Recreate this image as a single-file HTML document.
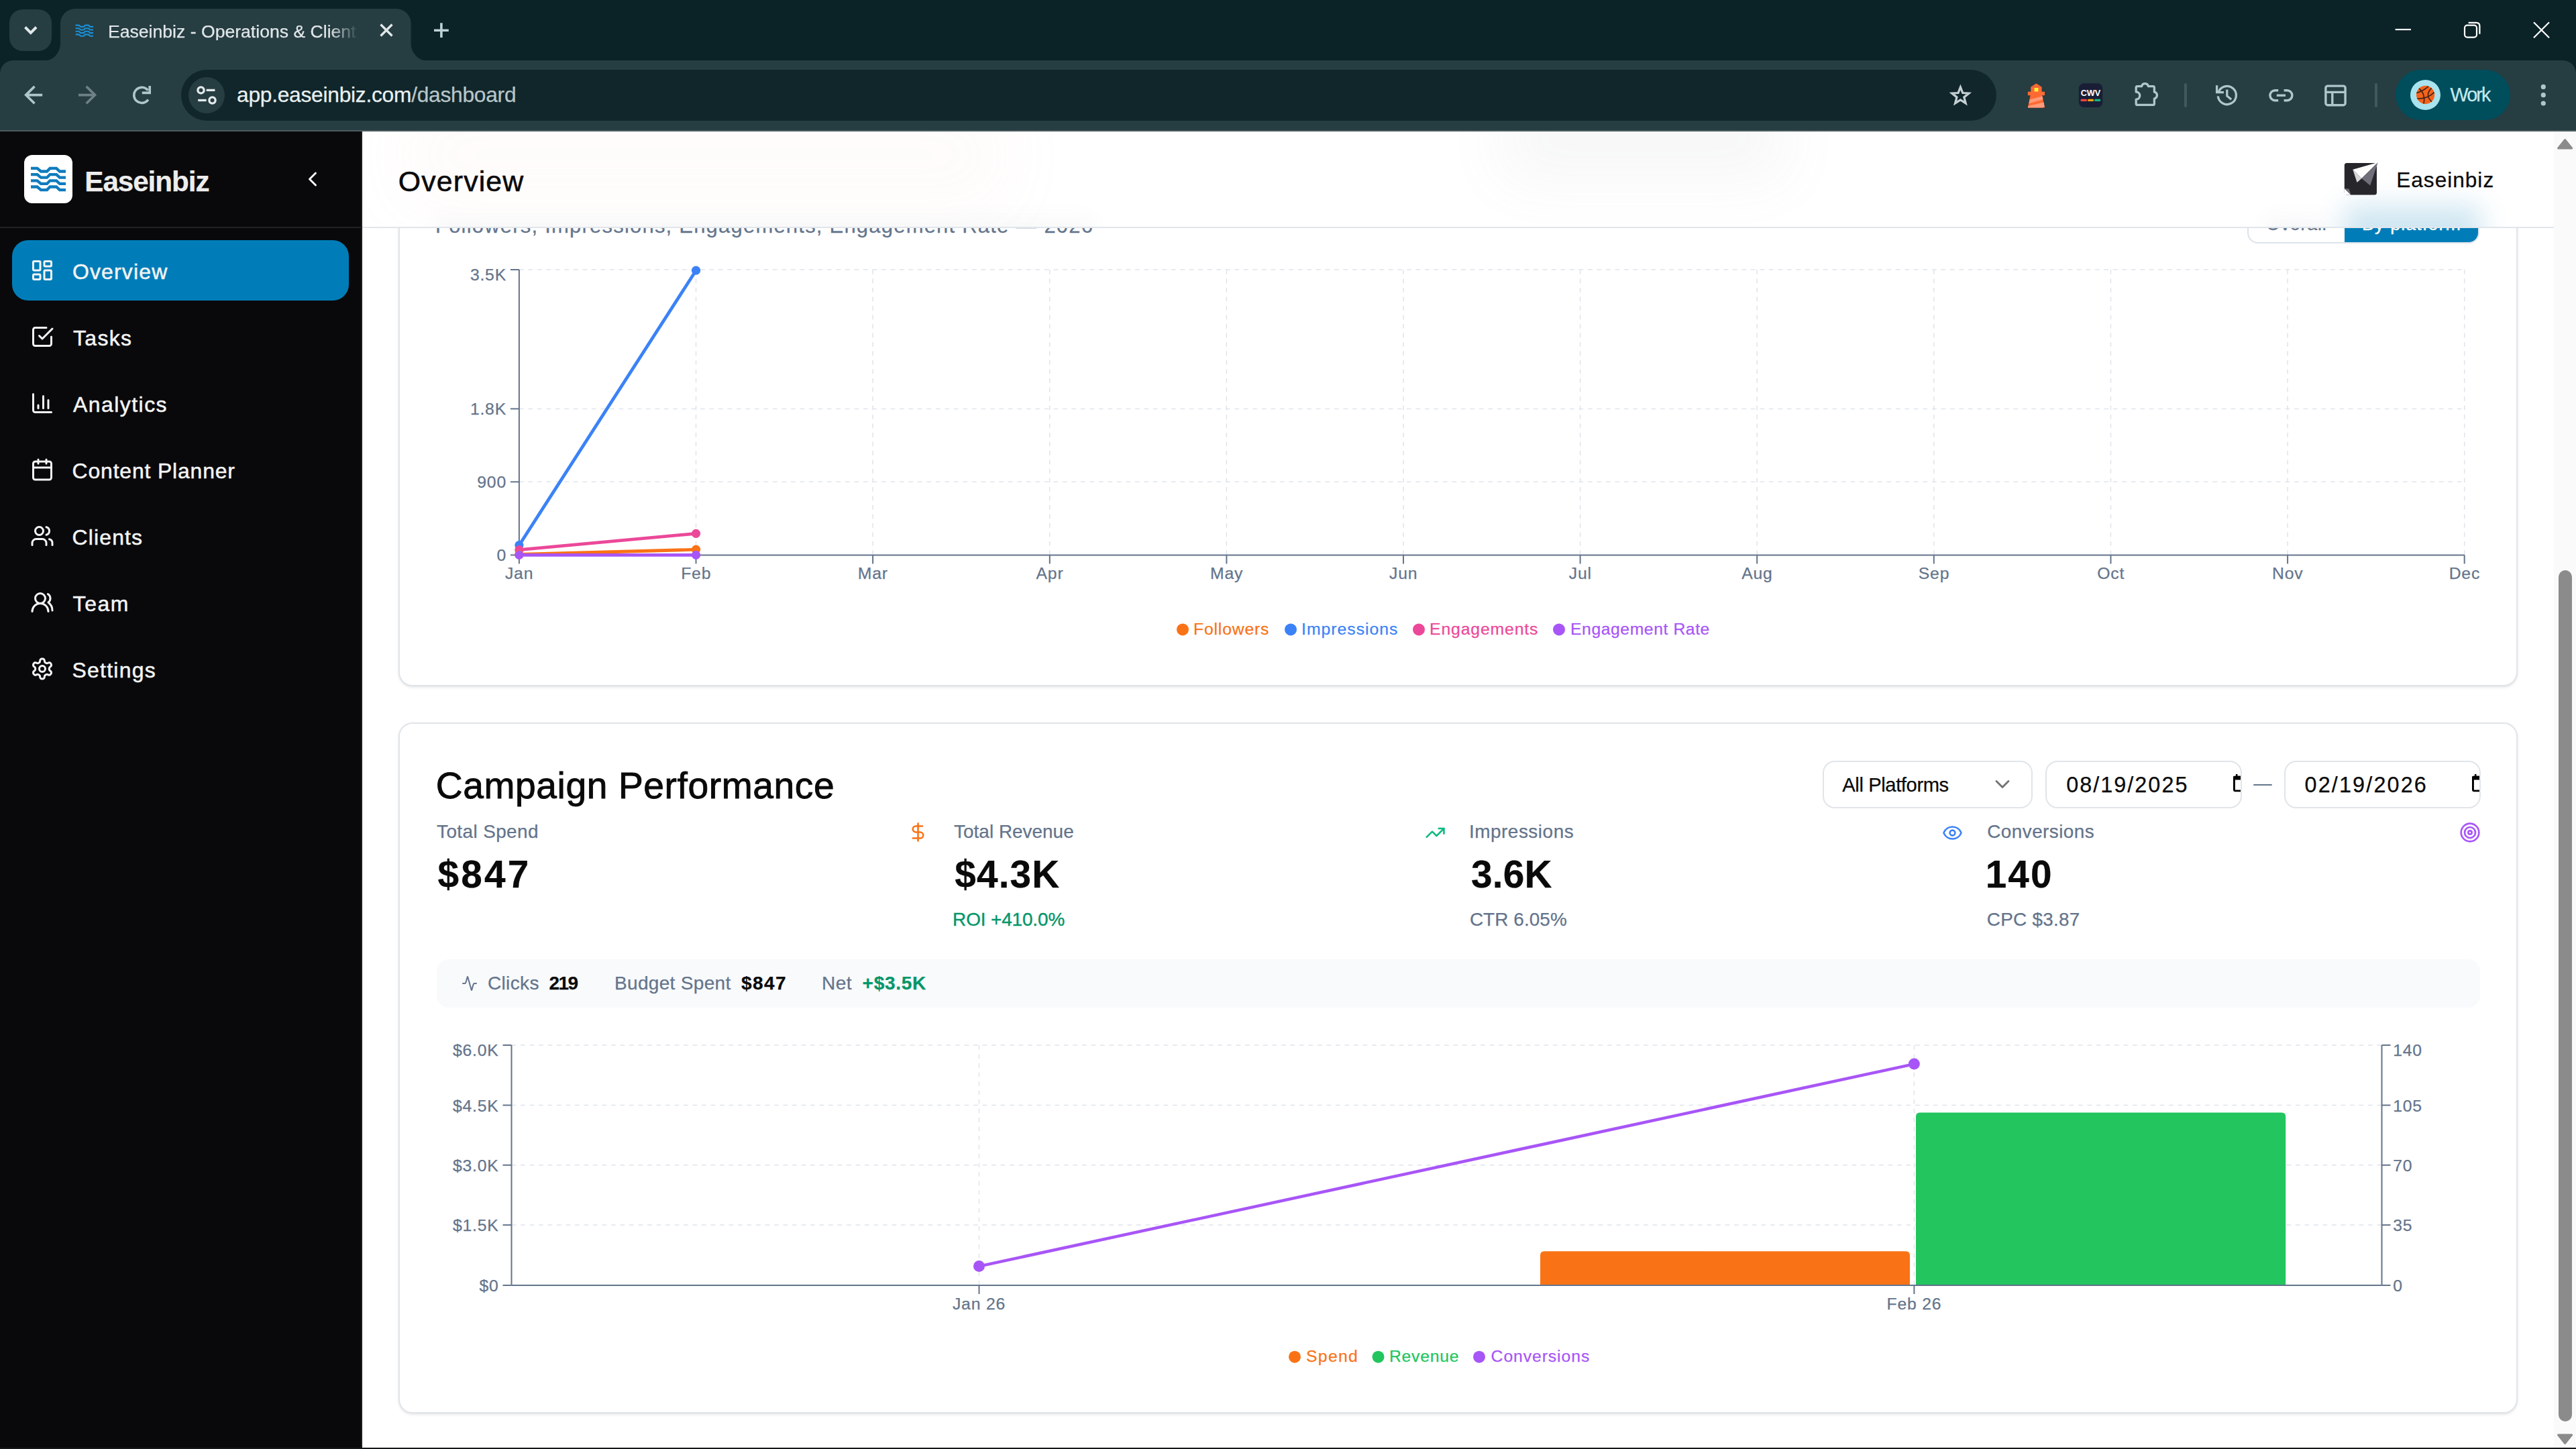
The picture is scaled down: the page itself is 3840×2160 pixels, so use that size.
<!DOCTYPE html>
<html lang="en">
<head>
<meta charset="utf-8">
<title>Easeinbiz - Operations &amp; Client</title>
<style>
*{box-sizing:border-box;margin:0;padding:0}
html,body{width:3840px;height:2160px;overflow:hidden;background:#fff}
body{position:relative;font-family:"Liberation Sans",sans-serif;color:#0a0a0a}
.abs{position:absolute}
.t{position:absolute;white-space:nowrap;line-height:1;-webkit-text-stroke:.25px currentColor}
svg{display:block;overflow:visible}
.ic{position:absolute;fill:none;stroke:currentColor;stroke-width:2;stroke-linecap:round;stroke-linejoin:round}
/* ---------- browser chrome ---------- */
#titlebar{left:0;top:0;width:3840px;height:130px;background:#0b2227}
#toolbar{left:0;top:90px;width:3840px;height:104px;background:#263d42;border-radius:20px 20px 0 0}
#tbline{left:0;top:194px;width:3840px;height:2px;background:#4b5c60}
#tabsearch{left:14px;top:14px;width:63px;height:62px;background:#263d42;border-radius:20px}
#urlbar{left:270px;top:104px;width:2706px;height:76px;background:#10262b;border-radius:38px}
#siteinfo{left:281px;top:115px;width:54px;height:54px;border-radius:27px;background:#263d42}
#work{left:3571px;top:104px;width:171px;height:75px;border-radius:38px;background:#004d5c}
#avatar{left:3593px;top:119px;width:45px;height:45px;border-radius:50%;background:#a9e3ee}
.sep{width:4px;height:36px;top:124px;background:#41585d;border-radius:2px}
/* ---------- sidebar ---------- */
#side{left:0;top:196px;width:540px;height:1964px;background:#09090b;border-right:2px solid #1c1c1f}
#sidehead{left:0;top:0;width:538px;height:144px;border-bottom:2px solid #222225}
#logo{left:36px;top:35px;width:72px;height:72px;border-radius:12px;background:#fff}
#navact{left:18px;top:162px;width:502px;height:90px;border-radius:24px;background:#007db8}
.nav{color:#f4f4f5;font-size:31.9px;letter-spacing:1.3px;-webkit-text-stroke:.5px #f4f4f5}
/* ---------- main ---------- */
#main{left:540px;top:196px;width:3267px;height:1962px;background:#fff;overflow:hidden}
#scroll{left:3807px;top:196px;width:33px;height:1962px;background:#fafafa}
#thumb{left:7px;top:654px;width:20px;height:1269px;border-radius:10px;background:#8b8b8b}
#bottombar{left:0;top:2158px;width:3840px;height:2px;background:#141719}
.card{border:2px solid #e0e5ea;border-radius:21px;background:#fff;box-shadow:0 1.5px 4.5px rgba(0,0,0,.08),0 1.5px 3px -1.5px rgba(0,0,0,.08)}
#hdr{left:540px;top:196px;width:3267px;height:144px;background:#fff;border-bottom:2px solid #e0e6eb;overflow:hidden}
.ax{font-size:24.75px;fill:#64748b;stroke:#64748b;stroke-width:.25px;font-family:"Liberation Sans",sans-serif}
.lg{font-size:24px}
</style>
</head>
<body>
<!-- CHROME -->
<div id="titlebar" class="abs"></div>
<div id="tabsearch" class="abs"></div>
<svg class="abs" style="left:0;top:0" width="700" height="92" viewBox="0 0 700 92"><path d="M64,91 A26,26 0 0 0 90,65 L90,35 A22,22 0 0 1 112,13 L590.6,13 A22,22 0 0 1 612.6,35 L612.6,65 A26,26 0 0 0 638.6,91 Z" fill="#263d42"/></svg>
<div id="toolbar" class="abs"></div>
<div id="tbline" class="abs"></div>
<div id="urlbar" class="abs"></div>
<div id="siteinfo" class="abs"></div>
<div id="work" class="abs"></div>
<div id="avatar" class="abs"></div>
<div class="abs sep" style="left:3256px"></div>
<div class="abs sep" style="left:3540px"></div>
<svg class="abs" style="left:0;top:0" width="3840" height="196" viewBox="0 0 3840 196"><path d="M37.5 40.5 L45.8 48.8 L54.1 40.5" stroke="#e1e8ea" stroke-width="4" fill="none"/>
<g stroke="#1b8fd6" stroke-width="2.1" fill="none"><polyline points="112.6,37.6 117.5,37.6 120.3,39.9 124.8,39.9 127.0,37.6 131.8,37.6 134.4,39.9 139.0,39.9"/><polyline points="112.6,42.2 117.5,42.2 120.3,44.5 124.8,44.5 127.0,42.2 131.8,42.2 134.4,44.5 139.0,44.5"/><polyline points="112.6,46.8 117.5,46.8 120.3,49.1 124.8,49.1 127.0,46.8 131.8,46.8 134.4,49.1 139.0,49.1"/><polyline points="112.6,51.4 117.5,51.4 120.3,53.7 124.8,53.7 127.0,51.4 131.8,51.4 134.4,53.7 139.0,53.7"/></g>
<path d="M567.5 36.5 L584.5 53.5 M584.5 36.5 L567.5 53.5" stroke="#e1e8ea" stroke-width="3.3" fill="none"/>
<path d="M647 45.2 H668.8 M657.9 34.3 V56.1" stroke="#bcd2d7" stroke-width="3.6" fill="none"/>
<path d="M63.2 141.6 H40 M51.5 128.9 L38.6 141.6 L51.5 154.3" stroke="#afc6cb" stroke-width="3.6" fill="none"/>
<path d="M117 141.6 H140.2 M128.7 128.9 L141.6 141.6 L128.7 154.3" stroke="#6d8185" stroke-width="3.6" fill="none"/>
<path d="M220.5 134.7 A11.6 11.6 0 1 0 220.9 148.5" stroke="#afc6cb" stroke-width="3.6" fill="none"/>
<path d="M213.4 138.4 H224.8 V128" stroke="#afc6cb" stroke-width="3.6" fill="none" transform="translate(-1.6,0)"/>
<g stroke="#e4e9eb" stroke-width="3.3" fill="none"><circle cx="299.5" cy="134.4" r="4.6"/><path d="M307.6 134.4 H320.4"/><path d="M295.2 149.5 H307.6"/><circle cx="316.5" cy="149.5" r="4.6"/></g>
<polygon points="2922.4,129.8 2925.8,138.5 2935.0,139.0 2927.8,144.9 2930.2,153.9 2922.4,148.8 2914.6,153.9 2917.0,144.9 2909.8,139.0 2919.0,138.5" stroke="#c6d0d3" stroke-width="3.2" fill="none" stroke-linejoin="miter"/>
<g><polygon points="3035.4,124.4 3043.6,129.6 3027.3,129.6" fill="#ff6a33"/><rect x="3027.3" y="129.4" width="16.3" height="7.6" fill="#ff6a33"/><rect x="3032.6" y="131" width="5.8" height="5.8" fill="#fff03a"/><rect x="3022.9" y="136.7" width="25.1" height="5.5" fill="#ff6a33"/><polygon points="3026.7,142 3044.1,142 3048,160.4 3022.9,160.4" fill="#ff6a33"/><polygon points="3025.6,148.5 3044.6,143.5 3045.6,148.2 3024.4,154.2" fill="#ff9a78"/><polygon points="3023.4,158 3046.7,152.6 3047.8,159.4 3044,160.4 3022.9,160.4" fill="#ff9a78"/></g>
<rect x="3098.9" y="124.3" width="35.4" height="35.7" rx="7.5" fill="#191e36"/>
<text x="3116.5" y="142.7" text-anchor="middle" font-family="Liberation Sans, sans-serif" font-weight="700" font-size="12.6" fill="#fff" textLength="29.6" lengthAdjust="spacingAndGlyphs">CWV</text>
<rect x="3101.6" y="147.7" width="9.3" height="3.4" rx="1.2" fill="#ef4444"/><rect x="3112.1" y="147.7" width="8.9" height="3.4" rx="1.2" fill="#f59e0b"/><rect x="3122.2" y="147.7" width="9" height="3.4" rx="1.2" fill="#10b981"/>
<path d="M3186.2 128.6 H3192.6 A5 5 0 0 1 3202.4 128.6 H3209.4 Q3211.4 128.6 3211.4 130.6 V137.2 A5 5 0 0 1 3211.4 147 V154.4 Q3211.4 156.4 3209.4 156.4 H3186.2 Q3184.2 156.4 3184.2 154.4 V148.2 A5.6 5.6 0 0 0 3184.2 137 V130.6 Q3184.2 128.6 3186.2 128.6 Z" stroke="#afc6cb" stroke-width="3.3" fill="none" stroke-linejoin="round"/>
<path d="M3307.0 137.5 A13.6 13.6 0 1 1 3306.3 143.4" stroke="#afc6cb" stroke-width="3.3" fill="none"/>
<path d="M3304.6 127.2 V137.6 H3315" stroke="#afc6cb" stroke-width="3.3" fill="none"/>
<path d="M3319.8 133.4 V143 L3326.2 148.2" stroke="#afc6cb" stroke-width="3.3" fill="none"/>
<g stroke="#afc6cb" stroke-width="3.4" fill="none"><path d="M3396.2 134.7 H3391.4 A7.5 7.5 0 0 0 3391.4 149.7 H3396.2"/><path d="M3404.6 134.7 H3409.4 A7.5 7.5 0 0 1 3409.4 149.7 H3404.6"/><path d="M3393.8 142.2 H3407"/></g>
<g stroke="#afc6cb" stroke-width="3.4" fill="none"><rect x="3466.9" y="128.1" width="29.2" height="28.6" rx="3"/><path d="M3466.9 137.4 H3496.1 M3476.8 137.4 V156.7"/></g>
<g><circle cx="3615.6" cy="141.4" r="13.6" fill="#f4631a"/><path d="M3606 131.8 Q3616 140 3613 154.6 M3620 128.6 Q3612 136 3602.4 138.4 M3624.6 131.4 Q3614 142 3625 151.6 M3603.4 146.8 Q3618 148 3628.6 137.6" stroke="#3a2016" stroke-width="1.5" fill="none"/></g>
<g fill="#afc6cb"><circle cx="3791.3" cy="129.4" r="3.6"/><circle cx="3791.3" cy="141.7" r="3.6"/><circle cx="3791.3" cy="154" r="3.6"/></g>
<g stroke="#fff" stroke-width="2.2" fill="none"><path d="M3570.6 44 H3594"/><rect x="3674" y="37.6" width="18" height="18" rx="4"/><path d="M3679.6 33.8 H3691.5 Q3696.4 33.8 3696.4 38.7 V50.8"/><path d="M3777 33.2 L3800 56.2 M3800 33.2 L3777 56.2"/></g></svg>
<div class="t" style="left:161px;top:33.6px;font-size:26.6px;color:#e1e7e9;width:374px;overflow:hidden;-webkit-mask-image:linear-gradient(90deg,#000 88%,transparent 100%);mask-image:linear-gradient(90deg,#000 88%,transparent 100%)">Easeinbiz - Operations &amp; Client Management</div>
<div class="t" style="left:353px;top:126.3px;font-size:31.7px;letter-spacing:-.24px;color:#eaf0f2">app.easeinbiz.com<span style="color:#b9c6c9">/dashboard</span></div>
<div class="t" style="left:3652.4px;top:127px;font-size:28.7px;letter-spacing:-1.8px;color:#c4e9f0">Work</div>
<!-- SIDEBAR -->
<div id="side" class="abs">
<div id="sidehead" class="abs"></div>
<div id="logo" class="abs"></div>
<div id="navact" class="abs"></div>
<svg class="abs" style="left:0;top:0" width="540" height="143" viewBox="0 0 540 143" fill="none" stroke="#0f7cbd" stroke-width="4.3" stroke-linejoin="miter"><polyline points="46.0,54.9 55.5,54.9 61.0,59.5 70.0,59.5 74.5,54.9 84.0,54.9 89.0,59.5 98.0,59.5"/><polyline points="46.0,64.1 55.5,64.1 61.0,68.7 70.0,68.7 74.5,64.1 84.0,64.1 89.0,68.7 98.0,68.7"/><polyline points="46.0,73.3 55.5,73.3 61.0,77.9 70.0,77.9 74.5,73.3 84.0,73.3 89.0,77.9 98.0,77.9"/><polyline points="46.0,82.5 55.5,82.5 61.0,87.1 70.0,87.1 74.5,82.5 84.0,82.5 89.0,87.1 98.0,87.1"/></svg>
<div class="t" style="left:126.3px;top:54.3px;font-size:42.2px;font-weight:700;letter-spacing:-1.05px;color:#ededed">Easeinbiz</div>
<svg class="ic" style="left:447.8px;top:53.2px;color:#f4f4f5" width="36" height="36" viewBox="0 0 24 24"><path d="m15 18-6-6 6-6"/></svg>
<svg class="ic" style="left:45px;top:189px;color:#f4f4f5" width="36" height="36" viewBox="0 0 24 24"><rect width="7" height="9" x="3" y="3" rx="1"/><rect width="7" height="5" x="14" y="3" rx="1"/><rect width="7" height="9" x="14" y="12" rx="1"/><rect width="7" height="5" x="3" y="16" rx="1"/></svg>
<div class="t nav" style="left:108.0px;top:193.6px;letter-spacing:1.18px">Overview</div>
<svg class="ic" style="left:45px;top:288px;color:#f4f4f5" width="36" height="36" viewBox="0 0 24 24"><path d="m9 11 3 3L22 4"/><path d="M21 12v7a2 2 0 0 1-2 2H5a2 2 0 0 1-2-2V5a2 2 0 0 1 2-2h11"/></svg>
<div class="t nav" style="left:109.0px;top:292.6px;letter-spacing:1.38px">Tasks</div>
<svg class="ic" style="left:45px;top:387px;color:#f4f4f5" width="36" height="36" viewBox="0 0 24 24"><path d="M3 3v16a2 2 0 0 0 2 2h16"/><path d="M18 17V9"/><path d="M13 17V5"/><path d="M8 17v-3"/></svg>
<div class="t nav" style="left:109.0px;top:391.6px;letter-spacing:1.49px">Analytics</div>
<svg class="ic" style="left:45px;top:486px;color:#f4f4f5" width="36" height="36" viewBox="0 0 24 24"><path d="M8 2v4"/><path d="M16 2v4"/><rect width="18" height="18" x="3" y="4" rx="2"/><path d="M3 10h18"/></svg>
<div class="t nav" style="left:107.6px;top:490.6px;letter-spacing:0.85px">Content Planner</div>
<svg class="ic" style="left:45px;top:585px;color:#f4f4f5" width="36" height="36" viewBox="0 0 24 24"><path d="M16 21v-2a4 4 0 0 0-4-4H6a4 4 0 0 0-4 4v2"/><circle cx="9" cy="7" r="4"/><path d="M22 21v-2a4 4 0 0 0-3-3.87"/><path d="M16 3.13a4 4 0 0 1 0 7.75"/></svg>
<div class="t nav" style="left:107.6px;top:589.6px;letter-spacing:1.16px">Clients</div>
<svg class="ic" style="left:45px;top:684px;color:#f4f4f5" width="36" height="36" viewBox="0 0 24 24"><path d="M18 21a8 8 0 0 0-16 0"/><circle cx="10" cy="8" r="5"/><path d="M22 20c0-3.37-2-6.5-4-8a5 5 0 0 0-.45-8.3"/></svg>
<div class="t nav" style="left:108.6px;top:688.6px;letter-spacing:1.62px">Team</div>
<svg class="ic" style="left:45px;top:783px;color:#f4f4f5" width="36" height="36" viewBox="0 0 24 24"><path d="M12.22 2h-.44a2 2 0 0 0-2 2v.18a2 2 0 0 1-1 1.73l-.43.25a2 2 0 0 1-2 0l-.15-.08a2 2 0 0 0-2.73.73l-.22.38a2 2 0 0 0 .73 2.73l.15.1a2 2 0 0 1 1 1.72v.51a2 2 0 0 1-1 1.74l-.15.09a2 2 0 0 0-.73 2.73l.22.38a2 2 0 0 0 2.73.73l.15-.08a2 2 0 0 1 2 0l.43.25a2 2 0 0 1 1 1.73V20a2 2 0 0 0 2 2h.44a2 2 0 0 0 2-2v-.18a2 2 0 0 1 1-1.73l.43-.25a2 2 0 0 1 2 0l.15.08a2 2 0 0 0 2.73-.73l.22-.39a2 2 0 0 0-.73-2.73l-.15-.08a2 2 0 0 1-1-1.74v-.5a2 2 0 0 1 1-1.74l.15-.09a2 2 0 0 0 .73-2.73l-.22-.38a2 2 0 0 0-2.73-.73l-.15.08a2 2 0 0 1-2 0l-.43-.25a2 2 0 0 1-1-1.73V4a2 2 0 0 0-2-2z"/><circle cx="12" cy="12" r="3"/></svg>
<div class="t nav" style="left:107.6px;top:787.6px;letter-spacing:1.25px">Settings</div>
</div>
<!-- MAIN -->
<div id="main" class="abs">
<!--MAIN-CONTENT-->
<div class="abs" style="left:-540px;top:-196px;width:3840px;height:2160px">
<div class="abs card" style="left:594px;top:230px;width:3159px;height:793px"></div>
<div class="t" style="left:649.0px;top:320.7px;font-size:31.00px;letter-spacing:1.21px;color:#64748b;font-weight:400;">Followers, Impressions, Engagements, Engagement Rate — 2026</div>
<div class="abs" style="left:3350px;top:306px;width:346px;height:57px;border:2px solid #dde3ea;border-radius:16px;background:#fff;overflow:hidden"><div class="abs" style="left:143px;top:-2px;width:203px;height:57px;background:#007db8"></div></div>
<div class="t" style="left:3378.0px;top:321.4px;font-size:26.90px;letter-spacing:0.74px;color:#64748b;font-weight:400;-webkit-text-stroke:.4px #64748b">Overall</div>
<div class="t" style="left:3521.0px;top:321.4px;font-size:26.90px;letter-spacing:1.10px;color:#fff;font-weight:400;-webkit-text-stroke:.4px #fff">By platform</div>
<div class="abs card" style="left:594px;top:1077px;width:3159px;height:1030px"></div>
<svg class="abs" style="left:0;top:0" width="3840" height="2160" viewBox="0 0 3840 2160">
<g stroke="#dfe4ea" stroke-width="1.5" stroke-dasharray="6.75 6.75" fill="none"><line x1="773.9" y1="402.0" x2="3673.7" y2="402.0"/><line x1="773.9" y1="609.4" x2="3673.7" y2="609.4"/><line x1="773.9" y1="718.3" x2="3673.7" y2="718.3"/><line x1="1037.5" y1="402.0" x2="1037.5" y2="827.4"/><line x1="1301.1" y1="402.0" x2="1301.1" y2="827.4"/><line x1="1564.8" y1="402.0" x2="1564.8" y2="827.4"/><line x1="1828.4" y1="402.0" x2="1828.4" y2="827.4"/><line x1="2092.0" y1="402.0" x2="2092.0" y2="827.4"/><line x1="2355.6" y1="402.0" x2="2355.6" y2="827.4"/><line x1="2619.2" y1="402.0" x2="2619.2" y2="827.4"/><line x1="2882.8" y1="402.0" x2="2882.8" y2="827.4"/><line x1="3146.5" y1="402.0" x2="3146.5" y2="827.4"/><line x1="3410.1" y1="402.0" x2="3410.1" y2="827.4"/><line x1="3673.7" y1="402.0" x2="3673.7" y2="827.4"/></g>
<g stroke="#64748b" stroke-width="2" fill="none"><line x1="773.9" y1="402.0" x2="773.9" y2="827.4"/><line x1="773.9" y1="827.4" x2="3673.7" y2="827.4"/><line x1="760.9" y1="402.0" x2="773.9" y2="402.0"/><line x1="760.9" y1="609.4" x2="773.9" y2="609.4"/><line x1="760.9" y1="718.3" x2="773.9" y2="718.3"/><line x1="760.9" y1="827.4" x2="773.9" y2="827.4"/><line x1="773.9" y1="827.4" x2="773.9" y2="840.4"/><line x1="1037.5" y1="827.4" x2="1037.5" y2="840.4"/><line x1="1301.1" y1="827.4" x2="1301.1" y2="840.4"/><line x1="1564.8" y1="827.4" x2="1564.8" y2="840.4"/><line x1="1828.4" y1="827.4" x2="1828.4" y2="840.4"/><line x1="2092.0" y1="827.4" x2="2092.0" y2="840.4"/><line x1="2355.6" y1="827.4" x2="2355.6" y2="840.4"/><line x1="2619.2" y1="827.4" x2="2619.2" y2="840.4"/><line x1="2882.8" y1="827.4" x2="2882.8" y2="840.4"/><line x1="3146.5" y1="827.4" x2="3146.5" y2="840.4"/><line x1="3410.1" y1="827.4" x2="3410.1" y2="840.4"/><line x1="3673.7" y1="827.4" x2="3673.7" y2="840.4"/></g>
<text class="ax" x="755.0" y="418.1" text-anchor="end" letter-spacing=".8">3.5K</text>
<text class="ax" x="755.0" y="618.2" text-anchor="end" letter-spacing=".8">1.8K</text>
<text class="ax" x="755.0" y="726.8" text-anchor="end" letter-spacing=".8">900</text>
<text class="ax" x="755.0" y="835.9" text-anchor="end" letter-spacing=".8">0</text>
<text class="ax" x="774.1" y="863.0" text-anchor="middle" letter-spacing=".8">Jan</text>
<text class="ax" x="1037.7" y="863.0" text-anchor="middle" letter-spacing=".8">Feb</text>
<text class="ax" x="1301.3" y="863.0" text-anchor="middle" letter-spacing=".8">Mar</text>
<text class="ax" x="1565.0" y="863.0" text-anchor="middle" letter-spacing=".8">Apr</text>
<text class="ax" x="1828.6" y="863.0" text-anchor="middle" letter-spacing=".8">May</text>
<text class="ax" x="2092.2" y="863.0" text-anchor="middle" letter-spacing=".8">Jun</text>
<text class="ax" x="2355.8" y="863.0" text-anchor="middle" letter-spacing=".8">Jul</text>
<text class="ax" x="2619.4" y="863.0" text-anchor="middle" letter-spacing=".8">Aug</text>
<text class="ax" x="2883.0" y="863.0" text-anchor="middle" letter-spacing=".8">Sep</text>
<text class="ax" x="3146.7" y="863.0" text-anchor="middle" letter-spacing=".8">Oct</text>
<text class="ax" x="3410.3" y="863.0" text-anchor="middle" letter-spacing=".8">Nov</text>
<text class="ax" x="3673.9" y="863.0" text-anchor="middle" letter-spacing=".8">Dec</text>
<g stroke="#3b82f6" fill="#3b82f6"><line x1="773.9" y1="812.7" x2="1037.5" y2="403.2" stroke-width="4.8"/><circle cx="773.9" cy="812.7" r="6.6" stroke="none"/><circle cx="1037.5" cy="403.2" r="6.6" stroke="none"/></g>
<g stroke="#ec4899" fill="#ec4899"><line x1="773.9" y1="819.7" x2="1037.5" y2="795.3" stroke-width="4.8"/><circle cx="773.9" cy="819.7" r="6.6" stroke="none"/><circle cx="1037.5" cy="795.3" r="6.6" stroke="none"/></g>
<g stroke="#f97316" fill="#f97316"><line x1="773.9" y1="826.5" x2="1037.5" y2="819.2" stroke-width="4.8"/><circle cx="773.9" cy="826.5" r="6.6" stroke="none"/><circle cx="1037.5" cy="819.2" r="6.6" stroke="none"/></g>
<g stroke="#a855f7" fill="#a855f7"><line x1="773.9" y1="827.4" x2="1037.5" y2="827.4" stroke-width="4.8"/><circle cx="773.9" cy="827.4" r="6.6" stroke="none"/><circle cx="1037.5" cy="827.4" r="6.6" stroke="none"/></g>
<circle cx="1763.0" cy="938.4" r="9" fill="#f97316"/>
<circle cx="1924.0" cy="938.4" r="9" fill="#3b82f6"/>
<circle cx="2115.0" cy="938.4" r="9" fill="#ec4899"/>
<circle cx="2324.0" cy="938.4" r="9" fill="#a855f7"/>
<g stroke="#dfe4ea" stroke-width="1.5" stroke-dasharray="6.75 6.75" fill="none"><line x1="762.5" y1="1558.0" x2="3550.5" y2="1558.0"/><line x1="762.5" y1="1647.5" x2="3550.5" y2="1647.5"/><line x1="762.5" y1="1736.8" x2="3550.5" y2="1736.8"/><line x1="762.5" y1="1826.1" x2="3550.5" y2="1826.1"/><line x1="1459.5" y1="1558.0" x2="1459.5" y2="1916.0"/><line x1="2853.4" y1="1558.0" x2="2853.4" y2="1916.0"/></g>
<path d="M2296.0 1916.0 V1871.2 Q2296.0 1865.2 2302.0 1865.2 H2841.0 Q2847.0 1865.2 2847.0 1871.2 V1916.0 Z" fill="#f97316"/>
<path d="M2856.0 1916.0 V1664.4 Q2856.0 1658.4 2862.0 1658.4 H3401.2 Q3407.2 1658.4 3407.2 1664.4 V1916.0 Z" fill="#22c55e"/>
<g stroke="#64748b" stroke-width="2" fill="none"><line x1="762.5" y1="1558.0" x2="762.5" y2="1916.0"/><line x1="3550.5" y1="1558.0" x2="3550.5" y2="1916.0"/><line x1="762.5" y1="1916.0" x2="3550.5" y2="1916.0"/><line x1="749.5" y1="1558.0" x2="762.5" y2="1558.0"/><line x1="3550.5" y1="1558.0" x2="3563.5" y2="1558.0"/><line x1="749.5" y1="1647.5" x2="762.5" y2="1647.5"/><line x1="3550.5" y1="1647.5" x2="3563.5" y2="1647.5"/><line x1="749.5" y1="1736.8" x2="762.5" y2="1736.8"/><line x1="3550.5" y1="1736.8" x2="3563.5" y2="1736.8"/><line x1="749.5" y1="1826.1" x2="762.5" y2="1826.1"/><line x1="3550.5" y1="1826.1" x2="3563.5" y2="1826.1"/><line x1="749.5" y1="1916.0" x2="762.5" y2="1916.0"/><line x1="3550.5" y1="1916.0" x2="3563.5" y2="1916.0"/><line x1="1459.5" y1="1916.0" x2="1459.5" y2="1929.0"/><line x1="2853.4" y1="1916.0" x2="2853.4" y2="1929.0"/></g>
<text class="ax" x="743.6" y="1574.0" text-anchor="end" letter-spacing=".8">$6.0K</text>
<text class="ax" x="743.6" y="1656.6" text-anchor="end" letter-spacing=".8">$4.5K</text>
<text class="ax" x="743.6" y="1745.9" text-anchor="end" letter-spacing=".8">$3.0K</text>
<text class="ax" x="743.6" y="1835.2" text-anchor="end" letter-spacing=".8">$1.5K</text>
<text class="ax" x="743.6" y="1924.5" text-anchor="end" letter-spacing=".8">$0</text>
<text class="ax" x="3567.2" y="1574.0" text-anchor="start" letter-spacing=".8">140</text>
<text class="ax" x="3567.2" y="1656.6" text-anchor="start" letter-spacing=".8">105</text>
<text class="ax" x="3567.2" y="1745.9" text-anchor="start" letter-spacing=".8">70</text>
<text class="ax" x="3567.2" y="1835.2" text-anchor="start" letter-spacing=".8">35</text>
<text class="ax" x="3567.2" y="1924.5" text-anchor="start" letter-spacing=".8">0</text>
<text class="ax" x="1459.5" y="1951.6" text-anchor="middle" letter-spacing=".8">Jan 26</text>
<text class="ax" x="2853.4" y="1951.6" text-anchor="middle" letter-spacing=".8">Feb 26</text>
<g stroke="#a855f7" fill="#a855f7"><line x1="1459.5" y1="1887.6" x2="2853.4" y2="1586.1" stroke-width="4.5"/><circle cx="1459.5" cy="1887.6" r="8.5" stroke="none"/><circle cx="2853.4" cy="1586.1" r="8.5" stroke="none"/></g>
<circle cx="1930.0" cy="2022.7" r="9" fill="#f97316"/>
<circle cx="2054.5" cy="2022.7" r="9" fill="#22c55e"/>
<circle cx="2205.0" cy="2022.7" r="9" fill="#a855f7"/>
</svg>
<div class="t" style="left:1779.0px;top:925.5px;font-size:24.75px;letter-spacing:0.82px;color:#f97316;font-weight:400;">Followers</div>
<div class="t" style="left:1940.0px;top:925.5px;font-size:24.75px;letter-spacing:1.00px;color:#3b82f6;font-weight:400;">Impressions</div>
<div class="t" style="left:2131.0px;top:925.5px;font-size:24.75px;letter-spacing:0.87px;color:#ec4899;font-weight:400;">Engagements</div>
<div class="t" style="left:2341.0px;top:925.5px;font-size:24.75px;letter-spacing:0.56px;color:#a855f7;font-weight:400;">Engagement Rate</div>
<div class="t" style="left:1947.0px;top:2009.5px;font-size:24.75px;letter-spacing:1.31px;color:#f97316;font-weight:400;">Spend</div>
<div class="t" style="left:2071.0px;top:2009.5px;font-size:24.75px;letter-spacing:0.72px;color:#22c55e;font-weight:400;">Revenue</div>
<div class="t" style="left:2222.6px;top:2009.5px;font-size:24.75px;letter-spacing:0.91px;color:#a855f7;font-weight:400;">Conversions</div>
<div class="t" style="left:649.7px;top:1144.2px;font-size:55.20px;letter-spacing:0.59px;color:#0a0a0a;font-weight:400;-webkit-text-stroke:.9px #0a0a0a">Campaign Performance</div>
<div class="abs" style="left:2716.6px;top:1133.6px;width:313.8px;height:71.2px;border:2px solid #e1e5e9;border-radius:18px;background:#fff"></div>
<div class="t" style="left:2746.3px;top:1155.7px;font-size:29.20px;letter-spacing:-0.41px;color:#0a0a0a;font-weight:400;">All Platforms</div>
<svg class="ic" style="left:2966.5px;top:1151.0px;color:#737373;stroke-width:1.9" width="36" height="36" viewBox="0 0 24 24"><path d="m6 9 6 6 6-6"/></svg>
<div class="abs" style="left:3049.2px;top:1133.6px;width:292.6px;height:71.2px;border:2px solid #e1e5e9;border-radius:18px;background:#fff;overflow:hidden"><svg class="abs" style="left:277.9px;top:18.6px" width="30" height="28" viewBox="0 0 30 28"><rect x="3.9" y="0" width="2.6" height="4" fill="#000"/><rect x="1.45" y="4.25" width="26" height="20.6" rx="1.6" fill="none" stroke="#000" stroke-width="2.9"/><rect x="0" y="2.8" width="28" height="5.8" rx="1.5" fill="#000"/></svg></div>
<div class="t" style="left:3080.3px;top:1154.1px;font-size:32.40px;letter-spacing:2.00px;color:#0a0a0a;font-weight:400;">08/19/2025</div>
<div class="abs" style="left:3405.4px;top:1133.6px;width:292.6px;height:71.2px;border:2px solid #e1e5e9;border-radius:18px;background:#fff;overflow:hidden"><svg class="abs" style="left:277.9px;top:18.6px" width="30" height="28" viewBox="0 0 30 28"><rect x="3.9" y="0" width="2.6" height="4" fill="#000"/><rect x="1.45" y="4.25" width="26" height="20.6" rx="1.6" fill="none" stroke="#000" stroke-width="2.9"/><rect x="0" y="2.8" width="28" height="5.8" rx="1.5" fill="#000"/></svg></div>
<div class="t" style="left:3435.5px;top:1154.1px;font-size:32.40px;letter-spacing:2.14px;color:#0a0a0a;font-weight:400;">02/19/2026</div>
<div class="abs" style="left:3359.3px;top:1168.6px;width:27.4px;height:2.4px;border-radius:1px;background:#64748b"></div>
<div class="t" style="left:651.1px;top:1226.4px;font-size:27.90px;letter-spacing:0.40px;color:#64748b;font-weight:400;">Total Spend</div>
<div class="t" style="left:1422.1px;top:1226.4px;font-size:27.90px;letter-spacing:0.02px;color:#64748b;font-weight:400;">Total Revenue</div>
<div class="t" style="left:2189.9px;top:1226.4px;font-size:27.90px;letter-spacing:0.54px;color:#64748b;font-weight:400;">Impressions</div>
<div class="t" style="left:2962.3px;top:1226.4px;font-size:27.90px;letter-spacing:0.43px;color:#64748b;font-weight:400;">Conversions</div>
<div class="t" style="left:652.4px;top:1275.5px;font-size:56.75px;letter-spacing:3.25px;color:#0a0a0a;font-weight:700;">$847</div>
<div class="t" style="left:1423.3px;top:1275.5px;font-size:56.75px;letter-spacing:1.14px;color:#0a0a0a;font-weight:700;">$4.3K</div>
<div class="t" style="left:2192.9px;top:1275.5px;font-size:56.75px;letter-spacing:0.21px;color:#0a0a0a;font-weight:700;">3.6K</div>
<div class="t" style="left:2959.8px;top:1275.5px;font-size:56.75px;letter-spacing:2.00px;color:#0a0a0a;font-weight:700;">140</div>
<div class="t" style="left:1420.1px;top:1356.6px;font-size:27.90px;letter-spacing:-0.11px;color:#059669;font-weight:400;-webkit-text-stroke:.4px #059669">ROI +410.0%</div>
<div class="t" style="left:2190.9px;top:1356.6px;font-size:27.90px;letter-spacing:0.09px;color:#64748b;font-weight:400;">CTR 6.05%</div>
<div class="t" style="left:2961.8px;top:1356.6px;font-size:27.90px;letter-spacing:0.26px;color:#64748b;font-weight:400;">CPC $3.87</div>
<svg class="ic" style="left:1353.1px;top:1225.1px;color:#f97316;stroke-width:2" width="31" height="31" viewBox="0 0 24 24"><line x1="12" x2="12" y1="2" y2="22"/><path d="M17 5H9.500a3.500 3.500 0 0 0 0 7h5a3.500 3.500 0 0 1 0 7H6"/></svg>
<svg class="ic" style="left:2123.9px;top:1225.9px;color:#10b981;stroke-width:2" width="31" height="31" viewBox="0 0 24 24"><polyline points="22 7 13.5 15.5 8.5 10.5 2 17"/><polyline points="16 7 22 7 22 13"/></svg>
<svg class="ic" style="left:2895.3px;top:1225.5px;color:#3b82f6;stroke-width:2" width="31" height="31" viewBox="0 0 24 24"><path d="M2.062 12.348a1 1 0 0 1 0-.696 10.750 10.750 0 0 1 19.876 0 1 1 0 0 1 0 .696 10.750 10.750 0 0 1-19.876 0"/><circle cx="12" cy="12" r="3"/></svg>
<svg class="ic" style="left:3666.0px;top:1224.8px;color:#a855f7;stroke-width:2" width="32" height="32" viewBox="0 0 24 24"><circle cx="12" cy="12" r="10"/><circle cx="12" cy="12" r="6"/><circle cx="12" cy="12" r="2"/></svg>
<div class="abs" style="left:650.5px;top:1430px;width:3046px;height:71.5px;border-radius:18px;background:#f8fafc"></div>
<svg class="ic" style="left:687.6px;top:1454.3px;color:#64748b;stroke-width:2" width="24" height="24" viewBox="0 0 24 24"><path d="M22 12h-2.480a2 2 0 0 0-1.930 1.460l-2.350 8.360a.250.250 0 0 1-.480 0L9.240 2.180a.250.250 0 0 0-.480 0l-2.350 8.360A2 2 0 0 1 4.490 12H2"/></svg>
<div class="t" style="left:726.9px;top:1451.5px;font-size:28.00px;letter-spacing:0.37px;color:#64748b;font-weight:400;">Clicks</div>
<div class="t" style="left:818.6px;top:1451.5px;font-size:28.00px;letter-spacing:-1.67px;color:#0a0a0a;font-weight:700;">219</div>
<div class="t" style="left:916.0px;top:1451.5px;font-size:28.00px;letter-spacing:0.32px;color:#64748b;font-weight:400;">Budget Spent</div>
<div class="t" style="left:1104.9px;top:1451.5px;font-size:28.00px;letter-spacing:1.46px;color:#0a0a0a;font-weight:700;">$847</div>
<div class="t" style="left:1225.0px;top:1451.5px;font-size:28.00px;letter-spacing:0.50px;color:#64748b;font-weight:400;">Net</div>
<div class="t" style="left:1285.6px;top:1451.5px;font-size:28.00px;letter-spacing:0.71px;color:#059669;font-weight:700;">+$3.5K</div>
<div id="hdr" class="abs"><div class="abs" style="left:2953px;top:110px;width:205px;height:100px;background:#007db8;opacity:.19;filter:blur(21px)"></div><div class="abs" style="left:2838px;top:128px;width:90px;height:60px;background:#64748b;opacity:.05;filter:blur(14px)"></div><div class="abs" style="left:110px;top:128px;width:980px;height:60px;background:#64748b;opacity:.04;filter:blur(14px)"></div><div class="abs" style="left:60px;top:-40px;width:900px;height:150px;background:#f5c9b0;opacity:.06;filter:blur(50px)"></div><div class="abs" style="left:1700px;top:-50px;width:420px;height:120px;background:#8a8f99;opacity:.07;filter:blur(45px)"></div></div>
<div class="t" style="left:593.8px;top:248.5px;font-size:42.80px;letter-spacing:1.15px;color:#0a0a0a;font-weight:400;-webkit-text-stroke:.6px #0a0a0a">Overview</div>
<svg class="abs" style="left:3480px;top:230px" width="80" height="70" viewBox="3480 230 80 70"><rect x="3494.8" y="243" width="48.2" height="47.6" rx="3.5" fill="#27262b"/><polygon points="3494.8,281 3504.5,290.6 3494.8,290.6" fill="#fff"/><polygon points="3494.8,281 3501.5,281.6 3504.5,290.6" fill="#6e6d76"/><polygon points="3507.3,252.8 3544.8,241.9 3520.4,266.1" fill="#fdfdfd"/><polygon points="3507.3,252.8 3520.4,266.1 3513.6,272.1" fill="#d6d6d8"/><polygon points="3544.8,241.9 3520.4,266.1 3533.2,276.4" fill="#706f79"/></svg>
<div class="t" style="left:3572.2px;top:252.9px;font-size:31.60px;letter-spacing:1.00px;color:#0a0a0a;font-weight:400;">Easeinbiz</div>
</div>
<!--HDR-CONTENT-->
</div>
<div id="scroll" class="abs"><div id="thumb" class="abs"></div>
<svg class="abs" style="left:0;top:0" width="33" height="1961" viewBox="0 0 33 1961"><path d="M16.6 12.5 L26.6 25 H6.6 Z M16.6 1955.5 L26.6 1943 H6.6 Z" fill="#8b8b8b" stroke="#8b8b8b" stroke-width="3" stroke-linejoin="round"/></svg>
</div>
<div id="bottombar" class="abs"></div>
</body>
</html>
